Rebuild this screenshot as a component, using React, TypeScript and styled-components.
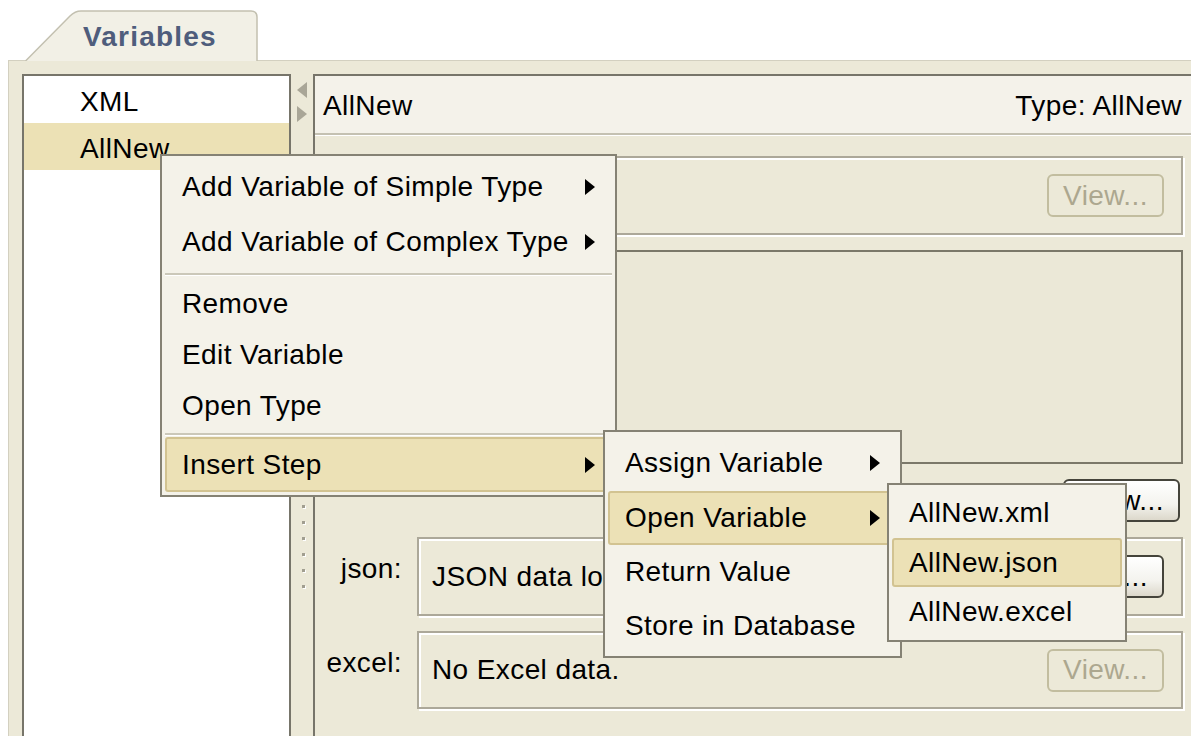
import React from 'react';
import styled, {createGlobalStyle} from 'styled-components';

const GlobalStyle = createGlobalStyle`
  html, body {
    margin: 0;
    padding: 0;
    background: #fff;
  }
  body {
    font-family: "Liberation Sans", Arial, sans-serif;
  }
`;

type Entry =
  | {kind: 'item'; label: string; h: number; sub?: boolean; active?: boolean}
  | {kind: 'sep'; h: number};

const mainMenu: Entry[] = [
  {kind: 'item', label: 'Add Variable of Simple Type', h: 55, sub: true},
  {kind: 'item', label: 'Add Variable of Complex Type', h: 56, sub: true},
  {kind: 'sep', h: 8},
  {kind: 'item', label: 'Remove', h: 51},
  {kind: 'item', label: 'Edit Variable', h: 51},
  {kind: 'item', label: 'Open Type', h: 51},
  {kind: 'sep', h: 6},
  {kind: 'item', label: 'Insert Step', h: 55, sub: true, active: true},
];

const stepMenu: Entry[] = [
  {kind: 'item', label: 'Assign Variable', h: 56, sub: true},
  {kind: 'item', label: 'Open Variable', h: 54, sub: true, active: true},
  {kind: 'item', label: 'Return Value', h: 54},
  {kind: 'item', label: 'Store in Database', h: 54},
];

const openMenu: Entry[] = [
  {kind: 'item', label: 'AllNew.xml', h: 50},
  {kind: 'item', label: 'AllNew.json', h: 49, active: true},
  {kind: 'item', label: 'AllNew.excel', h: 50},
];

function Menu({entries, left, top, width}: {entries: Entry[]; left: number; top: number; width: number}) {
  return (
    <PopupMenu $left={left} $top={top} $width={width}>
      {entries.map((e, i) =>
        e.kind === 'sep' ? (
          <MenuSeparator key={i} $h={e.h} />
        ) : (
          <MenuItem key={i} $h={e.h} $active={e.active}>
            <span>{e.label}</span>
            {e.sub && <MenuArrow />}
          </MenuItem>
        ),
      )}
    </PopupMenu>
  );
}

export default function App() {
  return (
    <>
      <GlobalStyle />
      <Screen>
        <TabStrip>
          <Tab>
            <TabShape viewBox="0 0 233 51" width="233" height="51">
              <path
                d="M0.5 51 L45 6 Q50 1 56 1 L226 1 Q232 1 232 7 L232 51"
                fill="#f2f0e6"
                stroke="#c3c0b0"
                strokeWidth="1.5"
              />
            </TabShape>
            <TabLabel>Variables</TabLabel>
          </Tab>
        </TabStrip>
        <Panel>
          <VarList>
            <VarRow>XML</VarRow>
            <VarRow $selected>AllNew</VarRow>
          </VarList>
          <Splitter>
            <ArrowLeft />
            <ArrowRight />
            <Grip>
              {[0, 1, 2, 3, 4, 5].map((i) => (
                <GripDot key={i} />
              ))}
            </Grip>
          </Splitter>
          <Detail>
            <DetailHeader>
              <span>AllNew</span>
              <span>Type: AllNew</span>
            </DetailHeader>
            <DetailBody>
              <FieldRow>
                <FieldLabel />
                <EtchedBox $h={79}>
                  <BoxText />
                  <ViewButton disabled>View...</ViewButton>
                </EtchedBox>
              </FieldRow>
              <FieldRow>
                <FieldLabel />
                <XmlArea />
              </FieldRow>
              <ButtonRow>
                <ViewButton>View...</ViewButton>
              </ButtonRow>
              <FieldRow>
                <FieldLabel>json:</FieldLabel>
                <EtchedBox $h={79}>
                  <BoxText>JSON data loaded.</BoxText>
                  <ViewButton>View...</ViewButton>
                </EtchedBox>
              </FieldRow>
              <FieldRow>
                <FieldLabel>excel:</FieldLabel>
                <EtchedBox $h={78}>
                  <BoxText>No Excel data.</BoxText>
                  <ViewButton disabled>View...</ViewButton>
                </EtchedBox>
              </FieldRow>
            </DetailBody>
          </Detail>
        </Panel>
        <Menu entries={mainMenu} left={160} top={154} width={457} />
        <Menu entries={stepMenu} left={603} top={430} width={299} />
        <Menu entries={openMenu} left={887} top={483} width={240} />
      </Screen>
    </>
  );
}

const Screen = styled.div`
  position: relative;
  width: 1191px;
  height: 736px;
  overflow: hidden;
  background: #fff;
  font-size: 28px;
  letter-spacing: 0.4px;
  color: #000;
`;

const TabStrip = styled.div`
  display: flex;
  align-items: flex-end;
  height: 60px;
  padding-left: 25px;
`;

const Tab = styled.div`
  display: grid;
  width: 233px;
  height: 51px;
  margin-bottom: -1px;
  position: relative;
  z-index: 1;
`;

const TabShape = styled.svg`
  grid-area: 1 / 1;
  display: block;
`;

const TabLabel = styled.div`
  grid-area: 1 / 1;
  align-self: center;
  padding-left: 58px;
  padding-top: 2px;
  font-weight: bold;
  letter-spacing: 1.2px;
  color: #4f5d7c;
`;

const Panel = styled.div`
  display: flex;
  box-sizing: border-box;
  height: 700px;
  margin-left: 8px;
  padding: 13px 0 0 13px;
  background: #ece9d8;
  border-top: 1px solid #d3d0c0;
  border-left: 1px solid #d3d0c0;
`;

const VarList = styled.div`
  box-sizing: border-box;
  width: 269px;
  flex-shrink: 0;
  background: #fff;
  border: 2px solid #77756a;
`;

const VarRow = styled.div<{$selected?: boolean}>`
  box-sizing: border-box;
  height: 47px;
  padding: 5px 0 0 56px;
  display: flex;
  align-items: center;
  background: ${(p) => (p.$selected ? '#ece1b5' : 'transparent')};
`;

const Splitter = styled.div`
  box-sizing: border-box;
  width: 22px;
  flex-shrink: 0;
  display: flex;
  flex-direction: column;
  padding: 8px 0 0 6px;
`;

const ArrowLeft = styled.div`
  width: 0;
  height: 0;
  border-top: 8px solid transparent;
  border-bottom: 8px solid transparent;
  border-right: 10px solid #a9a697;
`;

const ArrowRight = styled.div`
  width: 0;
  height: 0;
  margin-top: 8px;
  border-top: 8px solid transparent;
  border-bottom: 8px solid transparent;
  border-left: 10px solid #a9a697;
`;

const Grip = styled.div`
  display: flex;
  flex-direction: column;
  gap: 13px;
  margin: 383px 0 0 5px;
`;

const GripDot = styled.div`
  width: 3px;
  height: 3px;
  background: #a19e90;
  box-shadow: 1px 1px 0 #fff;
`;

const Detail = styled.div`
  box-sizing: border-box;
  width: 880px;
  flex-shrink: 0;
  border-top: 2px solid #77756a;
  border-left: 2px solid #77756a;
  background: #ece9d8;
`;

const DetailHeader = styled.div`
  display: flex;
  justify-content: space-between;
  align-items: center;
  height: 59px;
  padding: 2px 11px 0 8px;
  box-sizing: border-box;
  background: #f4f2ea;
  border-bottom: 2px solid #c4c1b2;
  box-shadow: 0 1px 0 #fff;
`;

const DetailBody = styled.div`
  display: flex;
  flex-direction: column;
  gap: 15px;
  padding: 21px 10px 0 0;
`;

const FieldRow = styled.div`
  display: flex;
`;

const FieldLabel = styled.div`
  box-sizing: border-box;
  width: 102px;
  flex-shrink: 0;
  padding: 16px 15px 0 0;
  text-align: right;
`;

const EtchedBox = styled.div<{$h: number}>`
  flex: 1;
  box-sizing: border-box;
  height: ${(p) => p.$h}px;
  display: flex;
  align-items: center;
  justify-content: space-between;
  padding: 0 17px 0 13px;
  border: 2px solid #aca899;
  box-shadow: inset 2px 2px 0 #fff, 2px 2px 0 #fff;
`;

const BoxText = styled.span`
  white-space: nowrap;
`;

const XmlArea = styled.div`
  flex: 1;
  box-sizing: border-box;
  height: 214px;
  border: 2px solid #7b7869;
  background: #ebe8d7;
`;

const ButtonRow = styled.div`
  display: flex;
  justify-content: flex-end;
  padding-right: 3px;
`;

const ViewButton = styled.button`
  box-sizing: border-box;
  width: 117px;
  height: 43px;
  padding: 0;
  font-family: inherit;
  font-size: 28px;
  letter-spacing: 0.4px;
  border-radius: 6px;
  color: #000;
  border: 2px solid #45443b;
  background: linear-gradient(180deg, #ffffff 0%, #f4f3ee 60%, #dcd8cb 100%);

  &:disabled {
    color: #aca78f;
    border-color: #c2bd9f;
    background: #ece9d8;
  }
`;

const PopupMenu = styled.div<{$left: number; $top: number; $width: number}>`
  position: absolute;
  left: ${(p) => p.$left}px;
  top: ${(p) => p.$top}px;
  width: ${(p) => p.$width}px;
  box-sizing: border-box;
  padding: 3px;
  background: #f4f2e9;
  border: 2px solid #858274;
  z-index: 5;
`;

const MenuItem = styled.div<{$h: number; $active?: boolean}>`
  box-sizing: border-box;
  height: ${(p) => p.$h}px;
  display: flex;
  align-items: center;
  justify-content: space-between;
  padding: 0 15px;
  white-space: nowrap;
  border: 2px solid ${(p) => (p.$active ? '#d2c391' : 'transparent')};
  border-radius: 3px;
  background: ${(p) => (p.$active ? '#ece1b6' : 'transparent')};
`;

const MenuArrow = styled.div`
  width: 0;
  height: 0;
  border-top: 8px solid transparent;
  border-bottom: 8px solid transparent;
  border-left: 10px solid #000;
`;

const MenuSeparator = styled.div<{$h: number}>`
  height: ${(p) => p.$h}px;
  display: flex;
  align-items: center;

  &::before {
    content: '';
    flex: 1;
    height: 2px;
    background: #cbc8b9;
    box-shadow: 0 1px 0 #fff;
  }
`;
